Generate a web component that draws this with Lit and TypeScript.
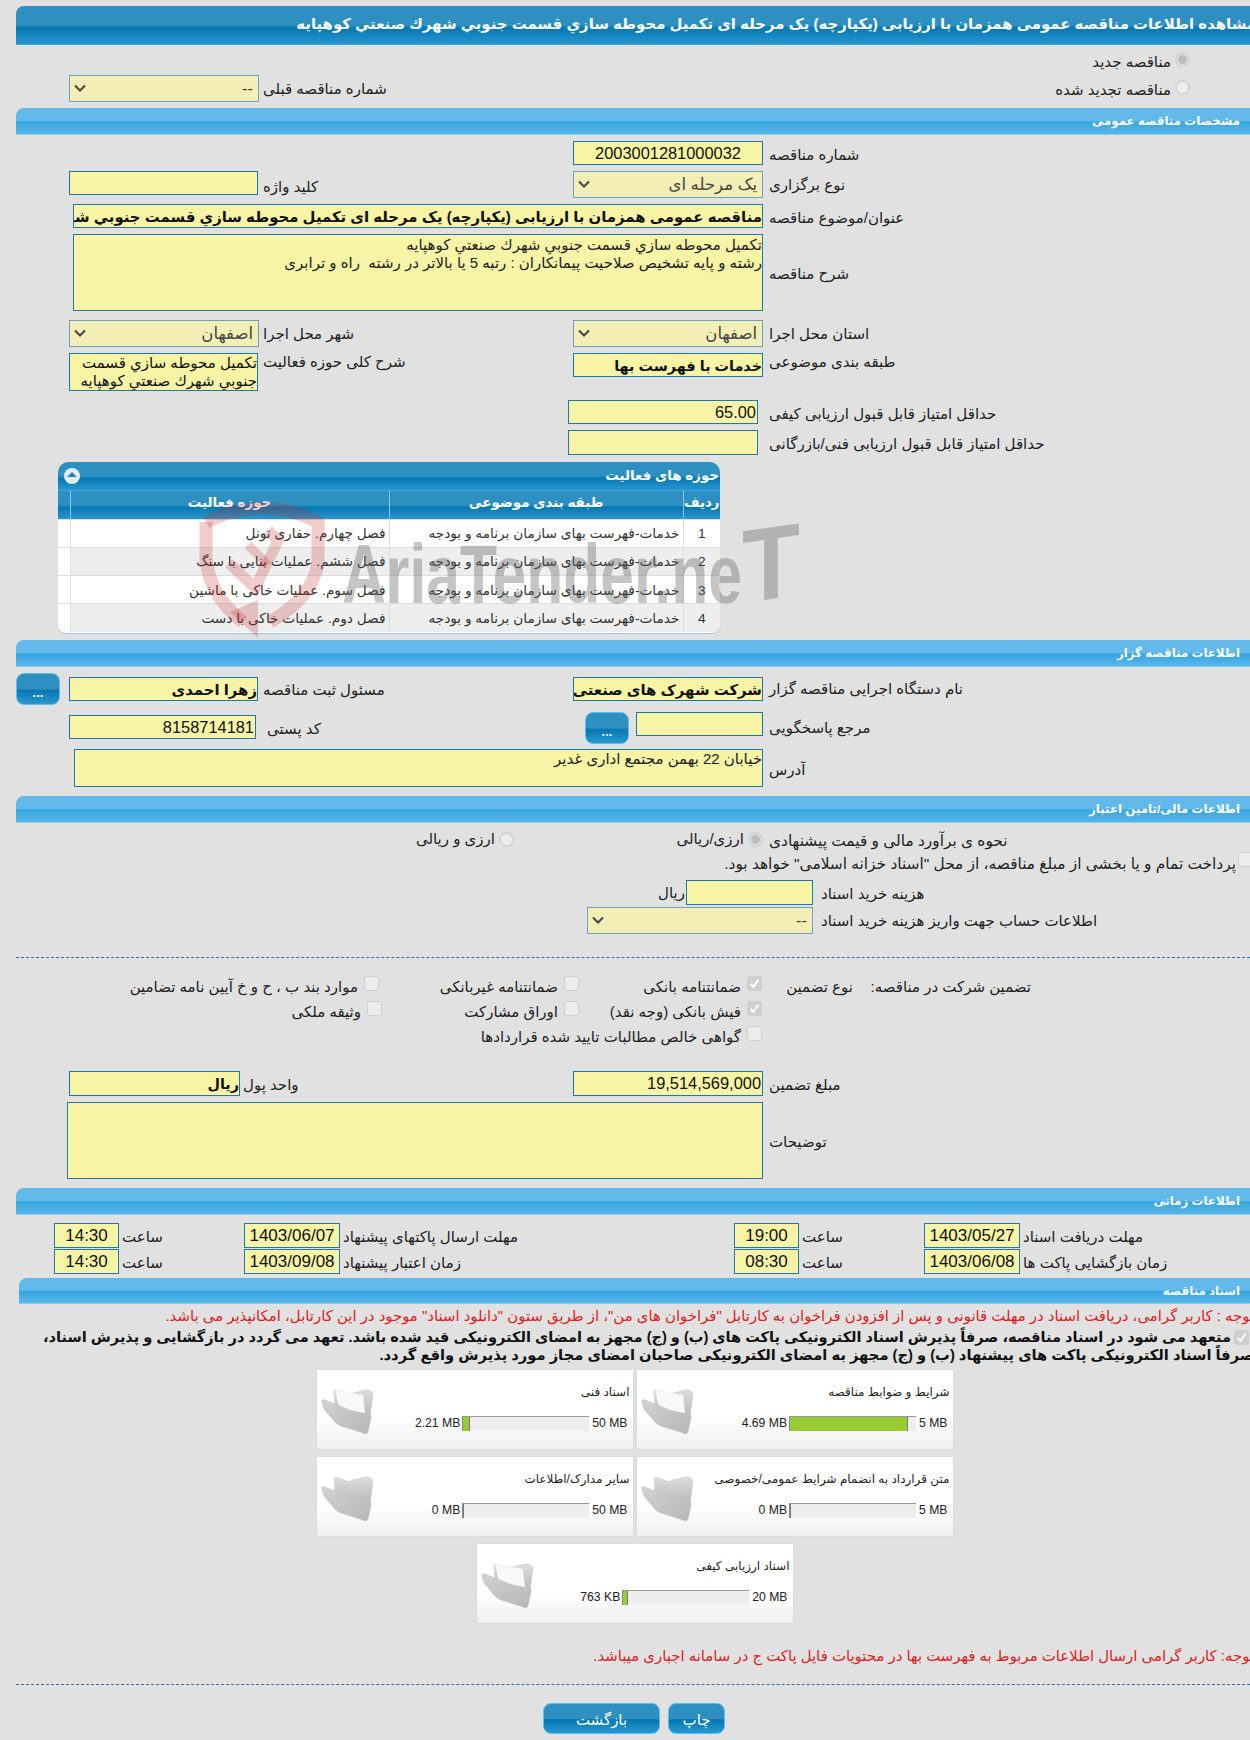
import { LitElement, html, css, svg } from "lit";
import { customElement } from "lit/decorators.js";

const chevron = html`<svg class="chev" viewBox="0 0 12 8" width="12" height="8"><path d="M1 1.5 L6 6.5 L11 1.5" fill="none" stroke="#444" stroke-width="2"/></svg>`;

const tick = html`<svg viewBox="0 0 15 15" width="15" height="15"><path d="M3.5 8 L6.5 11 L11.5 3.5" fill="none" stroke="#fff" stroke-width="2"/></svg>`;

const folder = (paper: boolean) => html`<svg class="folder" viewBox="0 0 54 48" width="54" height="48">
  <defs>
    <linearGradient id="fb" x1="0" y1="0" x2="0" y2="1"><stop offset="0" stop-color="#dedede"/><stop offset="1" stop-color="#b8b8b8"/></linearGradient>
    <linearGradient id="ff" x1="0" y1="0" x2="1" y2="1"><stop offset="0" stop-color="#d2d2d2"/><stop offset="1" stop-color="#b6b6b6"/></linearGradient>
  </defs>
  <path d="M13 4 Q15 3 18 4 L26 7 Q29 8 32 6 L43 3 Q50 2 52 7 L49 30 L14 24 Z" fill="url(#fb)" stroke="#cfcfcf" stroke-width=".6"/>
  ${paper ? svg`<path d="M14 3 L42 8 L44 27 L18 20 Z" fill="#f9f9f9" stroke="#e8e8e8" stroke-width=".6"/>` : ""}
  <path d="M1 15 Q0 12 4 13 L24 21 Q27 23 31 24 L48 27 Q51 28 50 31 L47 45 Q46 48 42 46 L20 39 Q16 38 13 34 L3 22 Z" fill="url(#ff)" stroke="#c4c4c4" stroke-width=".6"/>
</svg>`;

const check = (on: boolean) => html`<span class="check ${on ? "on" : ""}">${on ? tick : ""}</span>`;
const radio = (on: boolean) => html`<span class="radio ${on ? "on" : ""}"></span>`;

const activities = [
  ["1", "خدمات-فهرست بهای سازمان برنامه و بودجه", "فصل چهارم. حفاری تونل"],
  ["2", "خدمات-فهرست بهای سازمان برنامه و بودجه", "فصل ششم. عملیات بنایی با سنگ"],
  ["3", "خدمات-فهرست بهای سازمان برنامه و بودجه", "فصل سوم. عملیات خاکی با ماشین"],
  ["4", "خدمات-فهرست بهای سازمان برنامه و بودجه", "فصل دوم. عملیات خاکی با دست"],
];

const fileCard = (title: string, used: string, pct: number, max: string, paper: boolean) => html`
  <div class="card">
    ${folder(paper)}
    <div class="card-body">
      <div class="card-title">${title}</div>
      <div class="card-bar">
        <span class="used">${used}</span>
        <span class="bar"><span class="fill" style="width:${pct}%"></span></span>
        <span class="max">${max}</span>
      </div>
    </div>
  </div>`;

@customElement("app-root")
export class AppRoot extends LitElement {
  static styles = css`
    :host { display: block; }
    * { box-sizing: border-box; }
    .page {
      width: 1250px; height: 1740px; overflow: hidden; position: relative;
      padding: 6px 0 0 16px; background: #e1e1e1; color: #222;
      font: 15px/1.2 "Liberation Sans", "DejaVu Sans", sans-serif;
    }
    .title {
      height: 39px; display: flex; align-items: center; justify-content: flex-end;
      border-radius: 8px 0 0 0; border-bottom: 1px solid #3aa3e0; overflow: hidden;
      background: linear-gradient(#2e90c0 0, #2e90c0 50%, #0478b2 58%, #2a97cf 100%);
      color: #fff; font-weight: bold; font-size: 14.9px; white-space: nowrap;
    }
    .title span { direction: rtl; flex: none; margin-right: -6px; }
    .sec {
      height: 27px; margin-top: 6px; display: flex; align-items: center; justify-content: flex-start;
      border-radius: 8px 0 0 0; border-bottom: 1px solid #7fd0f5; padding: 1px 10px 0 0;
      background: linear-gradient(#62b9ea 0, #62b9ea 48%, #35a5e1 54%, #5ab7e9 100%);
      color: #fff; font-weight: bold; font-size: 11.8px; direction: rtl;
    }
    .row {
      display: grid; grid-template-columns: 53px 194px 310px 196px 1fr; align-items: start;
    }
    .lbl { direction: rtl; text-align: left; padding-top: 5px; white-space: nowrap; }
    .f {
      height: 24px; border: 1px solid #1f78ad; background: #f7f4a6; color: #111; direction: rtl;
      display: flex; align-items: center; white-space: nowrap; overflow: hidden; padding: 1px 1px 0;
      font-size: 16.4px;
    }
    .f.fa { font-size: 14.9px; font-weight: bold; padding: 3px 0 0; }
    .f.tight { font-size: 14.4px; }
    .f.w190 { width: 190px; }
    .f.w188 { width: 189px; }
    .f.center { justify-content: center; }
    .ta {
      border: 1px solid #1f78ad; background: #f7f4a6; color: #222; direction: rtl; padding: 1px 0;
      font-size: 15px; line-height: 18px; white-space: pre-wrap; overflow: hidden;
    }
    .sel {
      width: 190px; height: 27px; border: 1px solid #6fa3c4; background: #f2eeb6; color: #444;
      direction: rtl; display: flex; align-items: center; justify-content: space-between;
      padding: 1px 5px 0 4px; font-size: 16.5px;
    }
    .chev { flex: none; margin-top: -3px; }
    .rad { display: flex; gap: 4px; align-items: center; justify-content: flex-start; direction: rtl; }
    .radio { width: 15px; height: 15px; border-radius: 50%; border: 2px solid #d4d4d4; background: #eee; flex: none; }
    .radio.on { background: #bdbdbd; box-shadow: inset 0 0 0 1px #e8e8e8; }
    .check { width: 15px; height: 15px; border-radius: 3px; border: 1px solid #d0d0d0; background: #ececec; flex: none; display: block; }
    .check.on { background: #cfcfcf; border-color: #cfcfcf; }
    .check.on svg { display: block; margin: -1px; }

    .h24 { margin-top: 6px; }
    .mt9 { margin-top: 9px; }

    .r-new { height: 30px; display: flex; justify-content: flex-start; direction: rtl; padding: 7px 60px 0 0; }
    .r-new .rad, .r-renew .rad { align-items: flex-start; }
    .r-new .rad span:last-child, .r-renew .rad span:last-child { padding-top: 1px; }
    .r-renew { height: 27px; }
    .r-renew .rad { grid-column: 5; padding: 5px 60px 0 0; }

    .ml57 { margin-left: 57px; width: 690px; }
    .ml58 { margin-left: 58px; width: 689px; }
    .ml51 { margin-left: 51px; width: 696px; }

    .tbl-wrap {
      margin: 7px 0 0 42px; width: 662px; height: 171px; border-radius: 10px 10px 8px 8px; overflow: hidden;
      box-shadow: 0 1px 1px #9cc7e4; position: relative; background: #fff;
    }
    .tbl-title {
      height: 29px; display: flex; align-items: center; justify-content: space-between; padding: 0 1px 0 6px;
      background: linear-gradient(#2e90c0 0, #2e90c0 50%, #0478b2 58%, #2a97cf 100%);
      border-bottom: 1px solid #3aa3e0; color: #fff; font-weight: bold; font-size: 13.4px;
    }
    .tbl-title span { direction: rtl; }
    .toggle { width: 16px; height: 16px; border-radius: 50%; background: #dfeef7; position: relative; flex: none; }
    .toggle::after {
      content: ""; position: absolute; left: 3px; top: 4px;
      border-left: 5px solid transparent; border-right: 5px solid transparent; border-bottom: 5px solid #2e7fae;
    }
    table { width: 662px; table-layout: fixed; border-collapse: collapse; direction: rtl; }
    th {
      height: 28px; color: #fff; font-size: 13.4px; font-weight: bold; padding: 0 0 4px;
      background: linear-gradient(#2e90c0 0, #2e90c0 50%, #0478b2 58%, #2a97cf 100%);
      border-left: 1px solid #7fc8ee;
    }
    th:last-child { border-left: 0; }
    td {
      height: 28.3px; padding: 2px 3px 0 0; font-size: 13.7px; color: #333; white-space: nowrap; overflow: hidden;
      border-left: 1px solid #ddd; border-top: 1px solid #ddd; text-align: right;
    }
    td:last-child { border-left: 0; }
    td.n { text-align: center; padding: 2px 0 0; }
    tr.alt td { background: #eee; }
    tr.alt td:last-child { background: #fff; }

    .wm { position: absolute; left: 0; top: 0; pointer-events: none; }

    .r-org { display: grid; grid-template-columns: 44px 9px 194px 310px 196px 1fr; margin-top: 6px; height: 32px; align-items: center; }
    .btn {
      border-radius: 8px; border: 1px solid #5cc0ee; color: #fff; display: flex; align-items: center; justify-content: center;
      background: linear-gradient(#2e90c0 0, #2e90c0 50%, #0478b2 54%, #2a97cf 100%);
    }
    .btn.dots { width: 44px; height: 32px; font-weight: bold; font-size: 13px; padding-top: 8px; }
    .r-ref { display: grid; grid-template-columns: 53px 194px 322px 184px 1fr; margin-top: 7px; height: 31px; align-items: start; }
    .ref-box { display: flex; gap: 7px; }
    .mt3 { margin-top: 3px; }
    .w186 { width: 187px; }
    .w127 { width: 127px; flex: none; }
    .r-addr { margin-top: 6px; height: 38px; }

    .r-fin { margin-top: 3px; height: 26px; align-items: center; }
    .r-fin .lbl { padding-top: 4px; font-size: 15.4px; }
    .r-fin .pr { padding-right: 59px; }
    .r-treasury { height: 22px; display: flex; justify-content: flex-start; direction: rtl; gap: 2px; margin-right: -3px; font-size: 15.4px; }
    .r-treasury span:last-child { padding-top: 3px; }
    .r-doc { display: grid; grid-template-columns: 571px 226px 1fr; align-items: start; }
    .r-doc .lbl { padding-left: 8px; }
    .doc-cost { display: flex; justify-content: flex-end; align-items: center; gap: 1px; height: 25px; }
    .doc-cost .f { height: 25px; }
    .doc-cost span { direction: rtl; }
    .dash { height: 0; border-top: 1px dashed #1f78ad; }

    .guar {
      direction: rtl; display: grid; grid-template-columns: 178px 91px 183px 200px 1fr; grid-auto-rows: 25px;
      margin-right: 219px; margin-top: 16px; white-space: nowrap; align-items: center;
    }
    .opt { display: flex; gap: 6px; align-items: flex-start; }
    .opt .check { margin-top: -2px; }
    .gap-col { grid-column: 1 / span 2; }
    .third { margin-right: -3px; }

    .r-time { display: grid; grid-template-columns: 38px 65px 125px 96px 394px 65px 125px 96px 1fr; height: 25px; align-items: start; }
    .r-time .f { height: 25px; justify-content: center; font-size: 17px; padding: 1px 0 0; }
    .r-time .lbl { padding-left: 3px; }
    .mt8 { margin-top: 8px; }
    .mt1 { margin-top: 1px; }

    .sec-docs { margin: 4px 0 0 3px; height: 26px; }
    .note { direction: rtl; white-space: nowrap; display: flex; justify-content: flex-start; }
    .red { color: #e0201c; font-size: 14.9px; height: 22px; align-items: center; margin-right: -4px; margin-top: 2px; }
    .bold-note { direction: rtl; font-weight: bold; font-size: 14.7px; line-height: 18px; color: #111; white-space: nowrap; height: 38px; margin-right: -4px; }
    .bold-note .first { display: flex; gap: 3px; align-items: center; margin-right: 5px; font-size: 14.55px; }
    .bold-note .second { display: block; }

    .cards { display: flex; flex-direction: column; align-items: center; gap: 8px; margin-top: 4px; width: 1237px; }
    .cards-row { display: flex; gap: 4px; }
    .card {
      width: 316px; height: 79px; background: linear-gradient(#fff 0, #fff 62%, #efefef 100%);
      box-shadow: 0 0 2px #d2d2d2; display: flex; align-items: flex-start; padding: 17px 4px 0 4px; gap: 0;
    }
    .folder { flex: none; }
    .card-body { flex: 1; display: flex; flex-direction: column; align-items: stretch; margin-top: -2px; }
    .card-title { direction: rtl; font-size: 12px; height: 25px; color: #222; white-space: nowrap; margin-right: -1px; }
    .card-bar { display: flex; align-items: center; justify-content: flex-end; font-size: 12.2px; color: #222; height: 15px; margin-top: 6px; padding-right: 1px; }
    .used { white-space: nowrap; margin-right: 2px; }
    .max { white-space: nowrap; margin-left: 3px; }
    .bar { width: 127px; height: 15px; background: #eee; border-top: 1px solid #999; border-left: 1px solid #888; display: block; flex: none; }
    .fill { display: block; height: 14px; background: #9c3; border-right: 1px solid #777; }

    .red2 { margin-top: 24px; height: 20px; }
    .actions { display: flex; gap: 8px; margin: 18px 0 0 527px; }
    .actions .btn { height: 31px; font-size: 15px; padding-top: 2px; }
    .back { width: 117px; }
    .print { width: 57px; }
  `;

  private shield() {
    return html`<svg class="wm" width="1250" height="700" viewBox="0 0 1250 700">
      <g fill="none" stroke="#c62b2b" stroke-opacity=".24">
        <path d="M206 522 Q262 494 318 522 L318 562 Q314 596 270 622" stroke-width="13"/>
        <path d="M206 522 L206 560 Q210 596 243 622" stroke-width="13"/>
        <path d="M229 563 L255 588 L278 541 L268 530" stroke-width="11"/>
        <path d="M248 545 L268 565" stroke-width="9"/>
      </g>
      <path d="M230 612 L258 600 L258 638 Z" fill="#c62b2b" fill-opacity=".24"/>
      <g fill="#666" fill-opacity=".38" font-family="'Liberation Sans', sans-serif" font-weight="bold">
        <text x="342" y="603" font-size="84" textLength="400" lengthAdjust="spacingAndGlyphs">AriaTender.ne</text>
        <text transform="translate(742 603) skewY(-8)" font-size="104" textLength="58" lengthAdjust="spacingAndGlyphs">T</text>
      </g>
    </svg>`;
  }

  render() {
    return html`<div class="page">
      <div class="title"><span>مشاهده اطلاعات مناقصه عمومی همزمان با ارزیابی (یکپارچه) یک مرحله ای تکمیل محوطه سازي قسمت جنوبي شهرك صنعتي كوهپايه</span></div>

      <div class="r-new"><div class="rad">${radio(true)}<span>مناقصه جدید</span></div></div>
      <div class="row r-renew">
        <div class="sel" style="grid-column:2"><span>--</span>${chevron}</div>
        <div class="lbl" style="grid-column:3">شماره مناقصه قبلی</div>
        <div class="rad">${radio(false)}<span>مناقصه تجدید شده</span></div>
      </div>

      <div class="sec">مشخصات مناقصه عمومی</div>

      <div class="row h24">
        <div style="grid-column:4" class="f w190 center">2003001281000032</div>
        <div class="lbl" style="grid-column:5">شماره مناقصه</div>
      </div>
      <div class="row h24">
        <div style="grid-column:2" class="f w188"></div>
        <div class="lbl" style="padding-top:7px">کلید واژه</div>
        <div class="sel"><span>یک مرحله ای</span>${chevron}</div>
        <div class="lbl">نوع برگزاری</div>
      </div>
      <div class="h24 row">
        <div class="f fa ml57" style="grid-column:1 / span 4">مناقصه عمومی همزمان با ارزیابی (یکپارچه) یک مرحله ای تکمیل محوطه سازي قسمت جنوبي شهرك صنعتي كوهپايه</div>
        <div class="lbl">عنوان/موضوع مناقصه</div>
      </div>
      <div class="h24 row" style="align-items:center">
        <div class="ta ml57" style="grid-column:1 / span 4;height:77px">تكميل محوطه سازي قسمت جنوبي شهرك صنعتي كوهپايه
رشته و پایه تشخیص صلاحیت پیمانکاران : رتبه 5 یا بالاتر در رشته  راه و ترابری</div>
        <div class="lbl" style="padding-top:2px">شرح مناقصه</div>
      </div>
      <div class="row mt9">
        <div class="sel" style="grid-column:2"><span>اصفهان</span>${chevron}</div>
        <div class="lbl">شهر محل اجرا</div>
        <div class="sel"><span>اصفهان</span>${chevron}</div>
        <div class="lbl">استان محل اجرا</div>
      </div>
      <div class="row h24">
        <div class="ta" style="grid-column:2;height:38px;width:189px;padding:0;color:#111">تكميل محوطه سازي قسمت جنوبي شهرك صنعتي كوهپايه</div>
        <div class="lbl" style="padding-top:0">شرح کلی حوزه فعالیت</div>
        <div class="f fa tight w190">خدمات با فهرست بها</div>
        <div class="lbl" style="padding-top:0">طبقه بندی موضوعی</div>
      </div>
      <div class="row mt9">
        <div class="f w190" style="grid-column:4;margin-left:-5px">65.00</div>
        <div class="lbl">حداقل امتیاز قابل قبول ارزیابی کیفی</div>
      </div>
      <div class="row h24">
        <div class="f w190" style="grid-column:4;margin-left:-5px;height:25px"></div>
        <div class="lbl">حداقل امتیاز قابل قبول ارزیابی فنی/بازرگانی</div>
      </div>

      <div class="tbl-wrap">
        <div class="tbl-title"><span class="toggle"></span><span>حوزه های فعالیت</span></div>
        <table>
          <colgroup><col style="width:37px"/><col style="width:294px"/><col style="width:319px"/><col style="width:12px"/></colgroup>
          <thead><tr><th>ردیف</th><th>طبقه بندی موضوعی</th><th>حوزه فعالیت</th><th></th></tr></thead>
          <tbody>
            ${activities.map((a, i) => html`<tr class=${i % 2 ? "alt" : ""}><td class="n">${a[0]}</td><td>${a[1]}</td><td>${a[2]}</td><td></td></tr>`)}
          </tbody>
        </table>
      </div>

      <div class="sec" style="margin-top:7px">اطلاعات مناقصه گزار</div>

      <div class="r-org">
        <div class="btn dots">...</div>
        <div></div>
        <div class="f fa w188">زهرا احمدی</div>
        <div class="lbl" style="padding-top:2px">مسئول ثبت مناقصه</div>
        <div class="f fa w190">شرکت شهرک های صنعتی</div>
        <div class="lbl" style="padding-top:0">نام دستگاه اجرایی مناقصه گزار</div>
      </div>
      <div class="r-ref">
        <div class="f w186 mt3" style="grid-column:2">8158714181</div>
        <div class="lbl" style="padding:8px 0 0 4px">کد پستی</div>
        <div class="ref-box">
          <div class="btn dots">...</div>
          <div class="f w127"></div>
        </div>
        <div class="lbl" style="padding-top:7px">مرجع پاسخگویی</div>
      </div>
      <div class="row r-addr">
        <div class="ta ml58" style="grid-column:1 / span 4;height:38px;padding-top:0">خیابان 22 بهمن مجتمع اداری غدیر</div>
        <div class="lbl" style="padding-top:12px">آدرس</div>
      </div>

      <div class="sec" style="margin-top:9px">اطلاعات مالی/تامین اعتبار</div>

      <div class="row r-fin">
        <div class="rad pr" style="grid-column:3">${radio(false)}<span>ارزی و ریالی</span></div>
        <div class="rad" style="grid-column:4;margin-right:6px">${radio(true)}<span>ارزی/ریالی</span></div>
        <div class="lbl">نحوه ی برآورد مالی و قیمت پیشنهادی</div>
      </div>
      <div class="r-treasury">${check(false)}<span>پرداخت تمام و یا بخشی از مبلغ مناقصه، از محل "اسناد خزانه اسلامی" خواهد بود.</span></div>
      <div class="r-doc h24">
        <div></div>
        <div class="doc-cost"><span>ریال</span><div class="f w127"></div></div>
        <div class="lbl">هزینه خرید اسناد</div>
      </div>
      <div class="r-doc" style="margin-top:2px">
        <div></div>
        <div class="sel" style="width:226px"><span>--</span>${chevron}</div>
        <div class="lbl">اطلاعات حساب جهت واریز هزینه خرید اسناد</div>
      </div>
      <div class="dash" style="margin-top:23px"></div>

      <div class="guar">
        <div>تضمین شرکت در مناقصه:</div>
        <div>نوع تضمین</div>
        <div class="opt">${check(true)}<span>ضمانتنامه بانکی</span></div>
        <div class="opt">${check(false)}<span>ضمانتنامه غیربانکی</span></div>
        <div class="opt">${check(false)}<span>موارد بند ب ، ح و خ آیین نامه تضامین</span></div>
        <div class="gap-col"></div>
        <div class="opt">${check(true)}<span>فیش بانکی (وجه نقد)</span></div>
        <div class="opt">${check(false)}<span>اوراق مشارکت</span></div>
        <div class="opt third">${check(false)}<span>وثیقه ملکی</span></div>
        <div class="gap-col"></div>
        <div class="opt" style="grid-column:3 / span 2">${check(false)}<span>گواهی خالص مطالبات تایید شده قراردادها</span></div>
      </div>

      <div class="row" style="margin-top:22px">
        <div class="f fa tight" style="grid-column:2;width:171px;height:25px">ریال</div>
        <div class="lbl" style="margin-left:-20px">واحد پول</div>
        <div class="f w190" style="height:25px">19,514,569,000</div>
        <div class="lbl">مبلغ تضمین</div>
      </div>
      <div class="h24 row" style="align-items:center">
        <div class="ta ml51" style="grid-column:1 / span 4;height:77px"></div>
        <div class="lbl" style="padding-top:2px">توضیحات</div>
      </div>

      <div class="sec" style="margin-top:9px">اطلاعات زمانی</div>

      <div class="r-time mt8">
        <div></div>
        <div class="f">14:30</div><div class="lbl">ساعت</div>
        <div class="f">1403/06/07</div><div class="lbl">مهلت ارسال پاکتهای پیشنهاد</div>
        <div class="f">19:00</div><div class="lbl">ساعت</div>
        <div class="f">1403/05/27</div><div class="lbl">مهلت دریافت اسناد</div>
      </div>
      <div class="r-time mt1">
        <div></div>
        <div class="f">14:30</div><div class="lbl">ساعت</div>
        <div class="f">1403/09/08</div><div class="lbl">زمان اعتبار پیشنهاد</div>
        <div class="f">08:30</div><div class="lbl">ساعت</div>
        <div class="f">1403/06/08</div><div class="lbl">زمان بازگشایی پاکت ها</div>
      </div>

      <div class="sec sec-docs">اسناد مناقصه</div>

      <div class="note red">توجه : کاربر گرامی، دریافت اسناد در مهلت قانونی و پس از افزودن فراخوان به کارتابل "فراخوان های من"، از طریق ستون "دانلود اسناد" موجود در این کارتابل، امکانپذیر می باشد.</div>
      <div class="bold-note">
        <div class="first">${check(true)}<span>متعهد می شود در اسناد مناقصه، صرفاً پذیرش اسناد الکترونیکی پاکت های (ب) و (ج) مجهز به امضای الکترونیکی قید شده باشد. تعهد می گردد در بازگشایی و پذیرش اسناد،</span></div>
        <span class="second">صرفاً اسناد الکترونیکی پاکت های پیشنهاد (ب) و (ج) مجهز به امضای الکترونیکی صاحبان امضای مجاز مورد پذیرش واقع گردد.</span>
      </div>

      <div class="cards">
        <div class="cards-row">
          ${fileCard("اسناد فنی", "2.21 MB", 5, "50 MB", true)}
          ${fileCard("شرایط و ضوابط مناقصه", "4.69 MB", 94, "5 MB", true)}
        </div>
        <div class="cards-row">
          ${fileCard("سایر مدارک/اطلاعات", "0 MB", 0, "50 MB", false)}
          ${fileCard("متن قرارداد به انضمام شرایط عمومی/خصوصی", "0 MB", 0, "5 MB", false)}
        </div>
        <div class="cards-row">
          ${fileCard("اسناد ارزیابی کیفی", "763 KB", 4, "20 MB", true)}
        </div>
      </div>

      <div class="note red red2">توجه: کاربر گرامی ارسال اطلاعات مربوط به فهرست بها در محتویات فایل پاکت ج در سامانه اجباری میباشد.</div>
      <div class="dash" style="margin-top:17px"></div>
      <div class="actions">
        <div class="btn back">بازگشت</div>
        <div class="btn print">چاپ</div>
      </div>

      ${this.shield()}
    </div>`;
  }
}
